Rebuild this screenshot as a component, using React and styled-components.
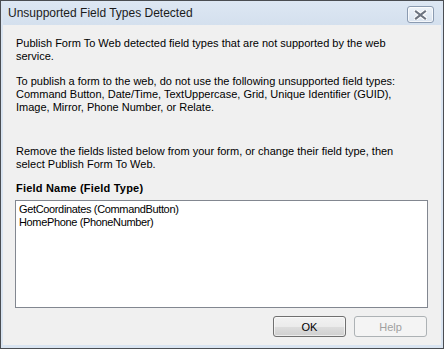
import React from 'react'
import styled, { createGlobalStyle } from 'styled-components'

const GlobalStyle = createGlobalStyle`
    html, body {
        margin: 0;
        padding: 0;
        background: #fff;
    }
    body {
        font-family: "Liberation Sans", Arial, sans-serif;
    }
`

export const Window = styled.div`
    width: 444px;
    height: 349px;
    box-sizing: border-box;
    border: 1px solid #4a4d52;
    background: #d9e4f1;
    display: flex;
    flex-direction: column;
    padding: 0 2px 3px 2px;
`

export const TitleBar = styled.div`
    height: 24px;
    flex: none;
    display: flex;
    align-items: center;
    justify-content: space-between;
    padding: 0 7px 0 5px;
    background: linear-gradient(#dde7f3, #d4e0ee);
`

export const Title = styled.span`
    font-size: 12px;
    color: #1b1b1b;
`

export const CloseButton = styled.div`
    width: 25px;
    height: 15px;
    border: 1px solid #8b9bb1;
    border-radius: 3px;
    background: linear-gradient(#eef3f9, #d9e3ef);
    box-shadow: inset 0 0 0 1px rgba(255, 255, 255, 0.7);
    display: flex;
    align-items: center;
    justify-content: center;
    margin-top: 3px;
`

export const Content = styled.div`
    flex: 1;
    background: #f0f0f0;
    display: flex;
    flex-direction: column;
    padding: 12px 13px 7px 12px;
    font-size: 11px;
    line-height: 13px;
    color: #000;
`

export const Para = styled.p`
    margin: 0 0 0 1px;
    margin-top: ${({ gap }) => gap || 0}px;
`

export const Heading = styled.div`
    margin: 11px 0 0 1px;
    font-weight: bold;
    letter-spacing: 0.2px;
`

export const ListBox = styled.div`
    margin-top: 5px;
    height: 108px;
    box-sizing: border-box;
    border: 1px solid #828790;
    background: #fff;
    padding: 2px 3px;
`

export const ListItem = styled.div`
    white-space: nowrap;
    letter-spacing: -0.35px;
`

export const ButtonRow = styled.div`
    margin-top: 8px;
    display: flex;
    justify-content: flex-end;
    gap: 8px;
    padding-right: 1px;
`

export const Button = styled.button`
    width: 73px;
    height: 21px;
    box-sizing: border-box;
    border-radius: 3px;
    font-family: "Liberation Sans", Arial, sans-serif;
    font-size: 11px;
    padding: 0;
    border: 1px solid ${({ disabled }) => (disabled ? '#adb2b5' : '#707070')};
    color: ${({ disabled }) => (disabled ? '#a0a0a0' : '#000')};
    background: ${({ disabled }) =>
        disabled ? '#f4f4f4' : 'linear-gradient(#f2f2f2 0%, #ebebeb 50%, #dddddd 51%, #cfcfcf 100%)'};
    box-shadow: ${({ disabled }) => (disabled ? 'none' : 'inset 0 0 0 1px rgba(255,255,255,0.6)')};
`

const CloseGlyph = () => (
    <svg width="13" height="10" viewBox="0 0 13 10">
        <path d="M2 1.5 L11 8.5 M11 1.5 L2 8.5" stroke="#fff" strokeWidth="4.2" strokeLinecap="square" />
        <path d="M2 1.5 L11 8.5 M11 1.5 L2 8.5" stroke="#6d7480" strokeWidth="2.2" strokeLinecap="square" />
    </svg>
)

const App = () => {
    return (
        <>
            <GlobalStyle />
            <Window>
                <TitleBar>
                    <Title>Unsupported Field Types Detected</Title>
                    <CloseButton>
                        <CloseGlyph />
                    </CloseButton>
                </TitleBar>
                <Content>
                    <Para>
                        Publish Form To Web detected field types that are not supported by the web
                        <br />
                        service.
                    </Para>
                    <Para gap={12}>
                        To publish a form to the web, do not use the following unsupported field types:
                        <br />
                        Command Button, Date/Time, TextUppercase, Grid, Unique Identifier (GUID),
                        <br />
                        Image, Mirror, Phone Number, or Relate.
                    </Para>
                    <Para gap={31}>
                        Remove the fields listed below from your form, or change their field type, then
                        <br />
                        select Publish Form To Web.
                    </Para>
                    <Heading>Field Name (Field Type)</Heading>
                    <ListBox>
                        <ListItem>GetCoordinates (CommandButton)</ListItem>
                        <ListItem>HomePhone (PhoneNumber)</ListItem>
                    </ListBox>
                    <ButtonRow>
                        <Button>OK</Button>
                        <Button disabled>Help</Button>
                    </ButtonRow>
                </Content>
            </Window>
        </>
    )
}

export default App
